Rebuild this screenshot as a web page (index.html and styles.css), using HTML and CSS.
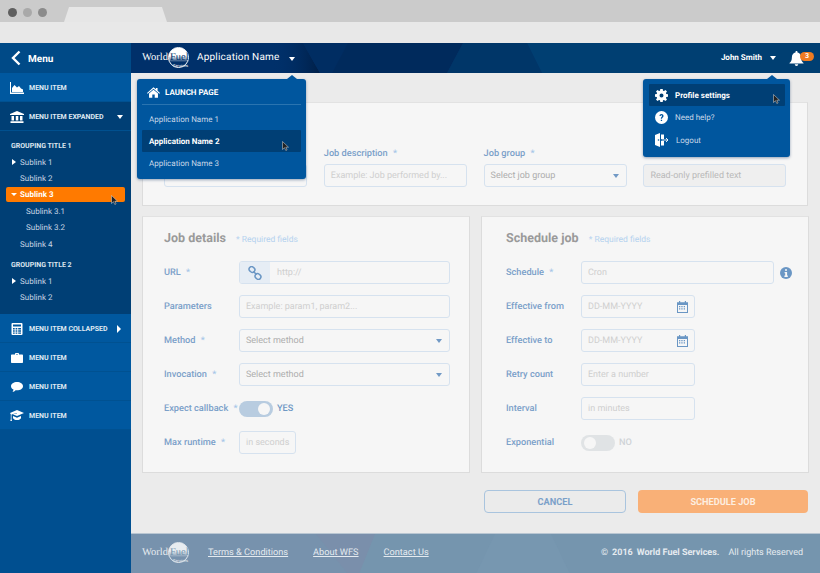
FILE: index.html
```html
<!DOCTYPE html>
<html lang="en">

<head>
    <meta charset="UTF-8">
    <meta name="viewport" content="width=device-width, initial-scale=1.0">
    <title>Schedule job</title>
    <link rel="stylesheet" href="styles.css">
</head>

<body>
    <div class="browser-top">
        <span class="dot dark"></span><span class="dot"></span><span class="dot mid"></span>
        <div class="tab"></div>
    </div>
    <div class="browser-bar"></div>

    <div class="app">
        <aside class="sidebar">
            <div class="menu-head">
                <svg width="10" height="16" viewBox="0 0 10 16"><path d="M8.5 1.500 2 8l6.500 6.500" fill="none" stroke="#fff" stroke-width="2.400"/></svg>
                <span>Menu</span>
            </div>
            <a class="menu-item">
                <svg class="mi-icon" width="14" height="12" viewBox="0 0 14 12"><path d="M0 0h1v10.500h13V12H0z" fill="#fff"/><path d="M2 10V6l2.500-3 2.500 2.500L9 4l2 2.500 2 1V10z" fill="#fff"/></svg>
                <span>MENU ITEM</span>
            </a>
            <a class="menu-item expanded">
                <svg class="mi-icon" width="14" height="12" viewBox="0 0 14 12"><path d="M7 0l7 3v1H0V3zM1.500 5h2.500v4.500H1.500zM5.800 5h2.500v4.500H5.800zM10 5h2.500v4.500H10zM.5 10.300h13V12H.5z" fill="#fff"/></svg>
                <span>MENU ITEM EXPANDED</span>
                <i class="caret-down"></i>
            </a>
            <div class="submenu">
                <h4>GROUPING TITLE 1</h4>
                <a class="sub"><i class="caret-right"></i>Sublink 1</a>
                <a class="sub">Sublink 2</a>
                <a class="sub active"><i class="caret-down small"></i>Sublink 3
                    <svg class="cursor" width="7" height="10" viewBox="0 0 7 10"><path d="M.5.500v8l2-1.800 1.300 2.800 1.300-.6-1.300-2.700h2.700z" fill="#222" stroke="#ddd" stroke-width=".5"/></svg>
                </a>
                <a class="sub deep">Sublink 3.1</a>
                <a class="sub deep">Sublink 3.2</a>
                <a class="sub after-deep">Sublink 4</a>
                <h4 class="second">GROUPING TITLE 2</h4>
                <a class="sub"><i class="caret-right"></i>Sublink 1</a>
                <a class="sub">Sublink 2</a>
            </div>
            <a class="menu-item">
                <svg class="mi-icon" width="11" height="12" viewBox="0 0 11 12"><path fill-rule="evenodd" d="M1 0h9a1 1 0 0 1 1 1v10a1 1 0 0 1-1 1H1a1 1 0 0 1-1-1V1a1 1 0 0 1 1-1zm.5 1.500v2h8v-2zm0 3.500v1.400h1.700V5zm2.600 0v1.400h1.700V5zm2.600 0v1.400h2.800V5zm-5.200 2.300v1.400h1.700V7.300zm2.600 0v1.400h1.700V7.300zm2.600 0v1.400h2.800V7.300zm-5.200 2.300v1.100h1.700V9.600zm2.600 0v1.100h1.700V9.600zm2.600 0v1.100h2.800V9.600z" fill="#fff"/></svg>
                <span>MENU ITEM COLLAPSED</span>
                <i class="caret-right big"></i>
            </a>
            <a class="menu-item">
                <svg class="mi-icon" width="12" height="10" viewBox="0 0 12 10"><path d="M4 1.500V.800C4 .3 4.300 0 4.800 0h2.400c.5 0 .8.300.8.800v.7h3c.6 0 1 .4 1 1V9c0 .6-.4 1-1 1H1c-.6 0-1-.4-1-1V2.500c0-.6.400-1 1-1zm1 0h2V1H5z" fill="#fff"/></svg>
                <span>MENU ITEM</span>
            </a>
            <a class="menu-item">
                <svg class="mi-icon" width="12" height="10" viewBox="0 0 12 10"><path d="M6 0c3.300 0 6 1.800 6 4.200S9.300 8.300 6 8.300c-.5 0-1 0-1.500-.1C3.700 9.100 2.500 9.800 1.500 10c.5-.7.900-1.500 1-2.400C1 6.900 0 5.600 0 4.200 0 1.800 2.700 0 6 0z" fill="#fff"/></svg>
                <span>MENU ITEM</span>
            </a>
            <a class="menu-item">
                <svg class="mi-icon" width="14" height="11" viewBox="0 0 14 11"><path d="M7 0l7 3-7 3-4.300-1.800L7 3.600 6.700 3 1.500 4.600V9l.5 2H.3l.5-2V4.300L0 3zM3 6l4 1.700L11 6v2.200C10 9.500 8.700 10 7 10S4 9.500 3 8.200z" fill="#fff"/></svg>
                <span>MENU ITEM</span>
            </a>
        </aside>

        <div class="main">
            <header class="topbar">
                <svg class="facets" width="689" height="30" viewBox="0 0 689 30">
                    <defs>
                        <linearGradient id="shade" x1="0" x2="1" y1="0" y2="0">
                            <stop offset="0" stop-color="#00306a" stop-opacity="0"/>
                            <stop offset="1" stop-color="#001f47"/>
                        </linearGradient>
                    </defs>
                    <polygon points="140,0 172,0 189,30 140,30" fill="url(#shade)"/>
                    <polygon points="172,0 217,0 201,30 189,30" fill="#002d62"/>
                    <polygon points="217,0 332,0 316,30 201,30" fill="#002a5c"/>
                    <polygon points="332,0 396,0 411,30 316,30" fill="#003668"/>
                    <polygon points="396,0 689,0 689,30 411,30" fill="#003f72"/>
                </svg>
                <div class="logo"><span class="logo-ring"></span><span class="logo-word">World</span><span class="logo-fuel">Fuel</span><span class="logo-sub">Services</span></div>
                <span class="app-name">Application Name</span>
                <i class="caret-down"></i>
                <div class="topbar-right">
                    <span class="user">John Smith</span>
                    <i class="caret-down"></i>
                    <div class="bell">
                        <svg width="15" height="15" viewBox="0 0 15 15"><path d="M7.500 0c.6 0 1 .4 1 1v.6c2.300.5 3.600 2.300 3.600 4.600 0 2.800.8 4.300 2.400 5.800v.5H.5V12C2.100 10.500 2.900 9 2.900 6.200c0-2.300 1.300-4.100 3.600-4.600V1c0-.6.400-1 1-1zM5.800 13.300h3.400c0 1-.8 1.700-1.700 1.700s-1.700-.7-1.700-1.700z" fill="#fff"/></svg>
                        <span class="badge">3</span>
                    </div>
                </div>
            </header>

            <main class="content">
                <section class="panel top-panel">
                    <div class="top-field">
                        <label>&nbsp;</label>
                        <div class="input"></div>
                    </div>
                    <div class="top-field">
                        <label>Job description <b>*</b></label>
                        <div class="input ph">Example: Job performed by...</div>
                    </div>
                    <div class="top-field">
                        <label>Job group <b>*</b></label>
                        <div class="input select">Select job group<i class="caret-select"></i></div>
                    </div>
                    <div class="top-field">
                        <label>&nbsp;</label>
                        <div class="input readonly">Read-only prefilled text</div>
                    </div>
                </section>

                <div class="columns">
                    <section class="panel form-panel">
                        <h3>Job details <small>* Required fields</small></h3>
                        <div class="form-grid">
                            <label>URL <b>*</b></label>
                            <div class="input url">
                                <span class="addon">
                                    <svg width="14" height="14" viewBox="0 0 14 14"><g fill="none" stroke="#6a96c4" stroke-width="1.500"><rect x="1" y="1" width="6" height="5" rx="2.500" transform="rotate(40 4 3.500)"/><rect x="7" y="8" width="6" height="5" rx="2.500" transform="rotate(40 10 10.500)"/><path d="M5.500 5.500l3 3"/></g></svg>
                                </span>
                                <span class="ph">http://</span>
                            </div>
                            <label>Parameters</label>
                            <div class="input ph">Example: param1, param2...</div>
                            <label>Method <b>*</b></label>
                            <div class="input select">Select method<i class="caret-select"></i></div>
                            <label>Invocation <b>*</b></label>
                            <div class="input select">Select method<i class="caret-select"></i></div>
                            <label>Expect callback <b>*</b></label>
                            <div class="toggle-row">
                                <span class="toggle on"><i></i></span>
                                <span class="toggle-text">YES</span>
                            </div>
                            <label>Max runtime <b>*</b></label>
                            <div class="input ph narrow">in seconds</div>
                        </div>
                    </section>

                    <section class="panel form-panel right">
                        <h3>Schedule job <small>* Required fields</small></h3>
                        <div class="form-grid">
                            <label>Schedule <b>*</b></label>
                            <div class="with-info">
                                <div class="input ph">Cron</div>
                                <svg width="12" height="12" viewBox="0 0 12 12"><circle cx="6" cy="6" r="6" fill="#6a96c4"/><path d="M5 2.200h2v1.600H5zM4.600 5h2.500v3.600h.7V10H4.400V8.600h.8V6.300h-.6z" fill="#f6f6f6"/></svg>
                            </div>
                            <label>Effective from</label>
                            <div class="input ph short date">DD-MM-YYYY
                                <svg width="11" height="12" viewBox="0 0 11 12"><path fill-rule="evenodd" d="M2 0h1.200v1.200h4.600V0H9v1.200h2V12H0V1.200h2zM1 4v7h9V4zm1 1h1.300v1.300H2zm2.300 0h1.300v1.300H4.300zm2.400 0H8v1.300H6.700zM2 7.300h1.300v1.300H2zm2.300 0h1.300v1.300H4.300zm2.400 0H8v1.300H6.700z" fill="#6a96c4"/></svg>
                            </div>
                            <label>Effective to</label>
                            <div class="input ph short date">DD-MM-YYYY
                                <svg width="11" height="12" viewBox="0 0 11 12"><path fill-rule="evenodd" d="M2 0h1.200v1.200h4.600V0H9v1.200h2V12H0V1.200h2zM1 4v7h9V4zm1 1h1.300v1.300H2zm2.300 0h1.300v1.300H4.300zm2.400 0H8v1.300H6.700zM2 7.300h1.300v1.300H2zm2.300 0h1.300v1.300H4.300zm2.400 0H8v1.300H6.700z" fill="#6a96c4"/></svg>
                            </div>
                            <label>Retry count</label>
                            <div class="input ph short">Enter a number</div>
                            <label>Interval</label>
                            <div class="input ph short">in minutes</div>
                            <label>Exponential</label>
                            <div class="toggle-row">
                                <span class="toggle"><i></i></span>
                                <span class="toggle-text off">NO</span>
                            </div>
                        </div>
                    </section>
                </div>

                <div class="actions">
                    <button class="btn-cancel">CANCEL</button>
                    <button class="btn-submit">SCHEDULE JOB</button>
                </div>
            </main>

            <footer class="footer">
                <svg class="facets" width="689" height="40" viewBox="0 0 689 40">
                    <polygon points="0,0 185,0 217,40 0,40" fill="#7792ad"/>
                    <polygon points="185,0 244,0 228,40 217,40" fill="#7a8fab"/>
                    <polygon points="364,0 420,0 439,40 345,40" fill="#7797b0"/>
                </svg>
                <div class="logo"><span class="logo-ring"></span><span class="logo-word">World</span><span class="logo-fuel">Fuel</span><span class="logo-sub">Services</span></div>
                <nav class="footer-links">
                    <a>Terms &amp; Conditions</a>
                    <a>About WFS</a>
                    <a>Contact Us</a>
                </nav>
                <div class="copyright"><span>©</span><b>2016</b><b>World Fuel Services.</b><span class="rights">All rights Reserved</span></div>
            </footer>

            <div class="dropdown app-menu">
                <div class="dd-title">
                    <svg width="13" height="11" viewBox="0 0 16 13"><path d="M8 0l3 2.500V1h2v3.200L16 7l-.8.900L8 1.900.8 7.900 0 7zM8 3.200l5.500 4.600V13H9.500V9h-3v4h-4V7.800z" fill="#fff"/></svg>
                    <span>LAUNCH PAGE</span>
                </div>
                <a class="dd-item">Application Name 1</a>
                <a class="dd-item selected">Application Name 2
                    <svg class="cursor" width="7" height="10" viewBox="0 0 7 10"><path d="M.5.500v8l2-1.800 1.300 2.800 1.300-.6-1.300-2.700h2.700z" fill="#222" stroke="#ddd" stroke-width=".5"/></svg>
                </a>
                <a class="dd-item">Application Name 3</a>
            </div>

            <div class="dropdown user-menu">
                <a class="um-item selected">
                    <svg width="13" height="13" viewBox="0 0 13 13"><path fill-rule="evenodd" d="M5.300 0h2.400l.3 1.700 1 .4L10.500 1l1.500 1.500-1.100 1.500.4 1 1.700.3v2.400l-1.700.3-.4 1 1.100 1.500-1.500 1.500L9 10.900l-1 .4-.3 1.700H5.300L5 11.300l-1-.4L2.500 12 1 10.500 2.100 9l-.4-1L0 7.700V5.300L1.700 5l.4-1L1 2.500 2.500 1 4 2.100l1-.4zM6.500 4.500a2 2 0 1 0 0 4 2 2 0 0 0 0-4z" fill="#fff"/></svg>
                    <span>Profile settings</span>
                    <svg class="cursor" width="7" height="10" viewBox="0 0 7 10"><path d="M.5.500v8l2-1.800 1.300 2.800 1.300-.6-1.300-2.700h2.700z" fill="#222" stroke="#ddd" stroke-width=".5"/></svg>
                </a>
                <a class="um-item">
                    <svg width="13" height="13" viewBox="0 0 13 13"><circle cx="6.500" cy="6.500" r="6.500" fill="#fff"/><path d="M4.500 5c0-1.200.9-1.900 2-1.900s2 .7 2 1.800c0 1.500-1.500 1.500-1.500 2.900H5.800c0-1.900 1.300-2 1.300-2.900 0-.4-.3-.7-.7-.7-.5 0-.7.400-.7.800zM5.800 8.800h1.300v1.300H5.800z" fill="#00569e"/></svg>
                    <span>Need help?</span>
                </a>
                <a class="um-item last">
                    <svg width="14" height="14" viewBox="0 0 14 14"><path d="M0 2l5-2v14l-5-2zM6 1.500h3V6H6zM6 8h3v4.500H6z" fill="#fff"/><path d="M6.500 7h6.500M11 5l2 2-2 2" fill="none" stroke="#fff" stroke-width=".9"/><circle cx="3.500" cy="7" r=".8" fill="#00569e"/></svg>
                    <span>Logout</span>
                </a>
            </div>
        </div>
    </div>
</body>
</html>
```

FILE: styles.css
```css
* {
    box-sizing: border-box;
}

html,
body {
    height: 100%;
}

body {
    margin: 0;
    font-family: Roboto, 'Liberation Sans', sans-serif;
    text-rendering: geometricPrecision;
    background: #ebebeb;
    overflow: hidden;
    display: flex;
    flex-direction: column;
}

/* browser frame */
.browser-top {
    height: 22px;
    background: #cbcbcb;
    display: flex;
    align-items: center;
    padding: 3px 0 0 8px;
    gap: 6px;
}

.dot {
    width: 9px;
    height: 9px;
    border-radius: 50%;
    background: #a9a9a9;
}

.dot.dark {
    background: #5f5f5f;
}

.dot.mid {
    background: #8b8b8b;
}

.tab {
    width: 103px;
    height: 15px;
    align-self: flex-end;
    margin-left: 11px;
    background: #e6e6e6;
    clip-path: polygon(5px 0, 98px 0, 103px 100%, 0 100%);
}

.browser-bar {
    height: 21px;
    background: #e8e8e8;
}

.app {
    flex: 1;
    display: flex;
    min-height: 0;
}

/* sidebar */
.sidebar {
    width: 131px;
    flex-shrink: 0;
    background: #004f90;
    display: flex;
    flex-direction: column;
}

.sidebar a {
    display: flex;
    align-items: center;
}

.menu-head {
    height: 30px;
    background: #004a87;
    color: #fff;
    display: flex;
    align-items: center;
    gap: 7px;
    padding-left: 11px;
    font-size: 10px;
    font-weight: 700;
}

.menu-head span {
    margin-top: 2px;
}

.menu-item {
    height: 29px;
    background: #00589f;
    color: #dfe8f2;
    font-size: 7px;
    font-weight: 700;
    padding: 1px 0 0 10px;
    border-bottom: 1px solid #005191;
}

.menu-item .mi-icon {
    flex-shrink: 0;
    width: 14px;
    margin-right: 5px;
}

.menu-item span {
    white-space: nowrap;
}

.menu-item.expanded {
    background: #003f75;
    border-bottom: 1px solid #00508f;
}

.caret-down {
    width: 0;
    height: 0;
    border-left: 3.500px solid transparent;
    border-right: 3.500px solid transparent;
    border-top: 4px solid #fff;
}

.caret-down.small {
    position: absolute;
    left: 5px;
    top: 6px;
    border-left-width: 3px;
    border-right-width: 3px;
    border-top-width: 3px;
}

.menu-item .caret-down {
    margin-left: auto;
    margin-right: 8px;
}

.caret-right {
    position: absolute;
    left: 6px;
    top: 5px;
    width: 0;
    height: 0;
    border-top: 3px solid transparent;
    border-bottom: 3px solid transparent;
    border-left: 4px solid #fff;
}

.caret-right.big {
    position: static;
    margin-left: auto;
    margin-right: 10px;
    border-top-width: 4px;
    border-bottom-width: 4px;
}

.submenu {
    height: 183px;
    background: #003f75;
    padding: 7px 6px 0;
}

.submenu h4 {
    margin: 0 0 0 5px;
    height: 16px;
    line-height: 16px;
    font-size: 7px;
    font-weight: 700;
    color: #dbe5ef;
}

.submenu h4.second {
    margin-top: 5px;
}

.sub {
    position: relative;
    height: 16px;
    padding-left: 14px;
    font-size: 8px;
    color: #c6d4e3;
}

.sub.active {
    height: 15px;
    margin: 1px 0;
    background: #ff7a00;
    border-radius: 2px;
    color: #fff;
    font-weight: 700;
}

.sub.deep {
    padding-left: 20px;
}

.sub.after-deep {
    margin-top: 1px;
}

.sub .cursor {
    position: absolute;
    right: 7px;
    top: 8px;
}

/* main column */
.main {
    flex: 1;
    position: relative;
    display: flex;
    flex-direction: column;
    min-width: 0;
}

.topbar {
    position: relative;
    height: 30px;
    background: #00306a;
    color: #fff;
    display: flex;
    align-items: center;
    padding-left: 11px;
    overflow: hidden;
}

.facets {
    position: absolute;
    left: 0;
    top: 0;
}

.topbar > *:not(.facets),
.footer > *:not(.facets) {
    position: relative;
}

.logo {
    position: relative;
    width: 48px;
    height: 24px;
    flex-shrink: 0;
    font-family: 'Liberation Serif', serif;
    color: #fff;
}

.logo-ring {
    position: absolute;
    left: 26px;
    top: 1px;
    width: 21px;
    height: 21px;
    border-radius: 50%;
    border: 1px solid #fff;
    background: linear-gradient(#fff 0, #fff 42%, transparent 75%);
}

.logo-word {
    position: absolute;
    left: 0;
    top: 6px;
    font-size: 10.500px;
}

.logo-fuel {
    position: absolute;
    left: 28px;
    top: 6px;
    font-size: 10.500px;
    color: #00306a;
}

.logo-sub {
    position: absolute;
    left: 31px;
    top: 17px;
    font-family: Roboto, sans-serif;
    font-size: 4px;
    color: #fff;
}

.app-name {
    margin-left: 7px;
    margin-top: -2px;
    font-size: 10px;
    letter-spacing: .2px;
}

.topbar > .caret-down {
    margin-left: 9px;
    margin-top: 2px;
}

.topbar-right {
    margin-left: auto;
    display: flex;
    align-items: center;
    padding-right: 6px;
}

.user {
    font-size: 8px;
    font-weight: 700;
    margin-right: 8px;
    margin-top: -2px;
}

.topbar-right .caret-down {
    margin-top: 0;
}

.bell {
    position: relative;
    width: 25px;
    margin-left: 13px;
    height: 16px;
}

.bell svg {
    display: block;
    margin-top: 1px;
}

.badge {
    position: absolute;
    left: 11px;
    top: 2px;
    width: 14px;
    height: 9px;
    border-radius: 5px;
    background: #ee7b22;
    color: #fff;
    font-size: 7px;
    font-weight: 700;
    line-height: 9px;
    text-align: center;
}

/* content */
.content {
    flex: 1;
    padding: 29px 12px 0 11px;
}

.panel {
    background: #f6f6f6;
    border: 1px solid #dcdcdc;
    border-top-color: #e2e2e2;
}

.top-panel {
    height: 104px;
    padding: 42px 21px 0;
    display: grid;
    grid-template-columns: repeat(4, 143px);
    column-gap: 16.800px;
}

.top-field label {
    display: block;
    height: 19px;
    line-height: 18px;
}

label {
    font-size: 9.200px;
    font-weight: 500;
    color: #7ba0c9;
    white-space: nowrap;
}

label b {
    margin-left: 3px;
    font-weight: 500;
    color: #a6c6e8;
}

.input {
    height: 23px;
    display: flex;
    align-items: center;
    padding: 0 6px;
    border: 1px solid #d6e2ef;
    border-radius: 3px;
    background: #f6f6f6;
    font-size: 9px;
    color: #adadad;
    white-space: nowrap;
}

.ph,
.input .ph {
    color: #cfcfcf;
}

.input.readonly {
    background: #efefef;
    color: #b9b9b9;
}

.input.select {
    justify-content: space-between;
    padding-right: 7px;
}

.caret-select {
    width: 0;
    height: 0;
    border-left: 3.500px solid transparent;
    border-right: 3.500px solid transparent;
    border-top: 4px solid #7199c5;
}

.columns {
    display: grid;
    grid-template-columns: 328px 328px;
    column-gap: 11px;
    margin-top: 10px;
}

.form-panel {
    height: 257px;
    padding: 13px 19px 0 21px;
}

.form-panel.right {
    padding-left: 24px;
}

h3 {
    margin: 0 0 11px;
    height: 20px;
    line-height: 18px;
    font-size: 12.500px;
    font-weight: 700;
    color: #9a9a9a;
}

h3 small {
    margin-left: 7px;
    font-size: 8.500px;
    font-weight: 400;
    color: #b5d2ef;
}

.form-grid {
    display: grid;
    grid-template-columns: 75px 211px;
    grid-auto-rows: 23px;
    row-gap: 11px;
    align-items: center;
}

.input.url {
    padding: 0;
}

.addon {
    width: 30px;
    height: 100%;
    flex-shrink: 0;
    margin-right: 7px;
    background: #e6edf5;
    border-radius: 2px 0 0 2px;
    display: flex;
    align-items: center;
    justify-content: center;
}

.input.narrow {
    width: 57px;
}

.input.short {
    width: 114px;
}

.input.date {
    justify-content: space-between;
}

.with-info {
    display: flex;
    align-items: center;
    gap: 6px;
}

.with-info .input {
    width: 193px;
}

.toggle-row {
    display: flex;
    align-items: center;
    gap: 4px;
}

.toggle {
    position: relative;
    width: 34px;
    height: 16px;
    border-radius: 8px;
    background: #e0e3e5;
}

.toggle i {
    position: absolute;
    left: 3px;
    top: 2px;
    width: 12px;
    height: 12px;
    border-radius: 50%;
    background: #f6f6f6;
}

.toggle.on {
    background: #b8cce0;
}

.toggle.on i {
    left: 19px;
}

.toggle-text {
    font-size: 9.200px;
    font-weight: 500;
    color: #6f97c4;
}

.toggle-text.off {
    color: #cfd3d6;
}

.actions {
    display: flex;
    justify-content: flex-end;
    gap: 12px;
    margin-top: 17px;
}

.actions button {
    height: 23px;
    border-radius: 4px;
    font-family: inherit;
    font-size: 9.200px;
    font-weight: 700;
}

.btn-cancel {
    width: 142px;
    background: #ebebeb;
    border: 1px solid #a9c4de;
    color: #7ba0c9;
}

.btn-submit {
    width: 170px;
    background: #f9b077;
    border: none;
    color: #fdeee0;
}

/* footer */
.footer {
    position: relative;
    height: 40px;
    background: #7595ae;
    border-top: 1px solid #b9c6d2;
    color: #e5ebf0;
    display: flex;
    align-items: center;
    padding: 0 17px 2px 11px;
    overflow: hidden;
}

.footer .logo-ring {
    border-color: #e7ecf0;
    background: linear-gradient(#e7ecf0 0, #e7ecf0 42%, transparent 75%);
}

.footer .logo-word,
.footer .logo-sub {
    color: #e7ecf0;
}

.footer .logo-fuel {
    color: #7595ae;
}

.footer-links {
    display: flex;
    gap: 25px;
    margin-left: 18px;
    font-size: 9.200px;
}

.footer-links a {
    text-decoration: underline;
}

.copyright {
    margin-left: auto;
    display: flex;
    gap: 4px;
    font-size: 9px;
}

.copyright b {
    font-weight: 700;
}

.copyright .rights {
    margin-left: 5px;
}

/* dropdowns over the page */
.dropdown {
    position: absolute;
    background: #00569e;
    border-radius: 3px;
    box-shadow: 0 1px 3px rgba(0, 40, 90, 0.4);
    color: #c8d7e8;
}

.dropdown::before {
    content: "";
    position: absolute;
    top: -4px;
    width: 0;
    height: 0;
    border-left: 5px solid transparent;
    border-right: 5px solid transparent;
    border-bottom: 4px solid #00569e;
}

.app-menu {
    left: 6px;
    top: 36px;
    width: 169px;
    height: 100px;
    padding: 0 5px;
}

.app-menu::before {
    left: 150px;
}

.dd-title {
    height: 26px;
    margin-bottom: 3px;
    padding: 1px 0 0 5px;
    display: flex;
    align-items: center;
    gap: 5px;
    border-bottom: 1px solid #2a74b0;
    color: #fff;
    font-size: 8px;
    font-weight: 700;
}

.dd-item {
    position: relative;
    display: flex;
    align-items: center;
    height: 22px;
    padding-left: 7px;
    font-size: 8px;
}

.selected {
    background: #003f75;
    color: #fff;
    font-weight: 700;
    border-radius: 1px;
}

.dd-item .cursor {
    position: absolute;
    right: 12px;
    top: 11px;
}

.user-menu {
    left: 512px;
    top: 36px;
    width: 147px;
    height: 78px;
    padding: 5px 5px 0 6px;
}

.user-menu::before {
    left: 124px;
}

.um-item {
    position: relative;
    display: flex;
    align-items: center;
    gap: 7px;
    height: 22px;
    padding-left: 6px;
    font-size: 8px;
}

.um-item.last {
    margin-top: 1px;
}

.um-item svg {
    flex-shrink: 0;
}

.um-item .cursor {
    position: absolute;
    right: 5px;
    top: 10px;
}
```
